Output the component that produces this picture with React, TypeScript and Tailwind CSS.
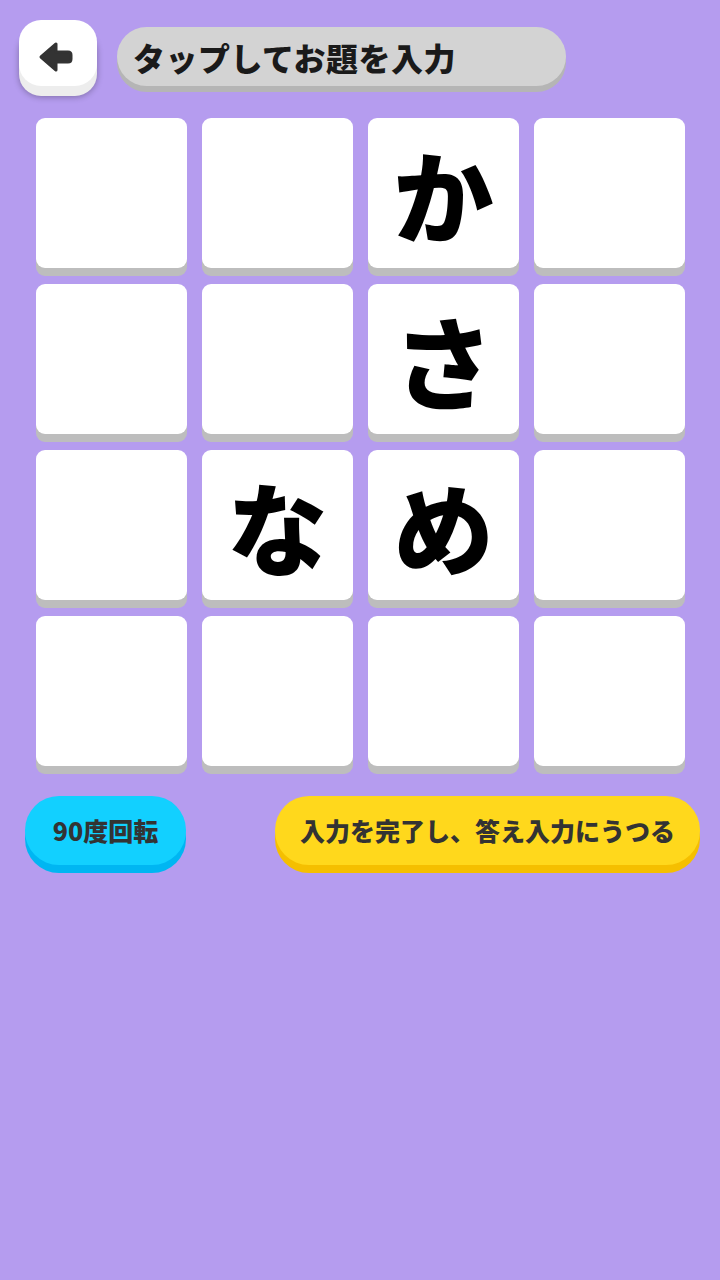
import React from 'react'

const cells: string[] = [
  '', '', 'か', '',
  '', '', 'さ', '',
  '', 'な', 'め', '',
  '', '', '', '',
]

const font = { fontFamily: '"Noto Sans CJK JP", "Noto Sans", sans-serif' }

function BackArrow() {
  return (
    <svg width="36" height="32" viewBox="0 0 36 32">
      <path
        d="M3 16 L18 3 L18 11 L30 11 Q33 11 33 14 L33 18 Q33 21 30 21 L18 21 L18 29 Z"
        fill="#333333"
        stroke="#333333"
        strokeWidth="3"
        strokeLinejoin="round"
      />
    </svg>
  )
}

export default function App() {
  return (
    <div
      className="w-[720px] h-[1280px] bg-[#b59cef] flex flex-col"
      style={font}
    >
      {/* ヘッダー */}
      <div className="flex items-start gap-[20px] pl-[19px] pt-[20px]">
        <button className="w-[78px] h-[66px] rounded-[22px] bg-white flex items-center justify-center pt-[8px] pr-[4px] shadow-[0_10px_0_#ededed,0_11px_6px_rgba(0,0,0,0.3)]">
          <BackArrow />
        </button>
        <div className="mt-[7px] w-[449px] h-[59px] rounded-full bg-[#d3d3d3] shadow-[0_6px_0_#b5b5b5] flex items-center pl-[16px]">
          <span className="text-[32px] font-black text-[#1a1a1a] tracking-[0.5px]">
            タップしてお題を入力
          </span>
        </div>
      </div>

      {/* マス目 */}
      <div className="grid grid-cols-[repeat(4,151px)] gap-x-[15px] gap-y-[16px] pl-[36px] mt-[32px]">
        {cells.map((c, i) => (
          <div
            key={i}
            className="h-[150px] rounded-[9px] bg-white shadow-[0_8px_0_#bdbdbd] flex items-center justify-center"
          >
            <span className="text-[100px] leading-none font-black text-black">{c}</span>
          </div>
        ))}
      </div>

      {/* ボタン */}
      <div className="flex items-start pl-[25px] mt-[30px]">
        <button className="w-[161px] h-[69px] rounded-[34px] bg-[#12d0ff] shadow-[0_8px_0_#00b6f2] flex items-center justify-center">
          <span className="text-[25px] font-black text-[#333333]">90度回転</span>
        </button>
        <button className="ml-[89px] w-[425px] h-[69px] rounded-[34px] bg-[#ffd81c] shadow-[0_8px_0_#f5bf00] flex items-center justify-center">
          <span className="text-[25px] font-black text-[#333333]">
            入力を完了し、答え入力にうつる
          </span>
        </button>
      </div>
    </div>
  )
}
